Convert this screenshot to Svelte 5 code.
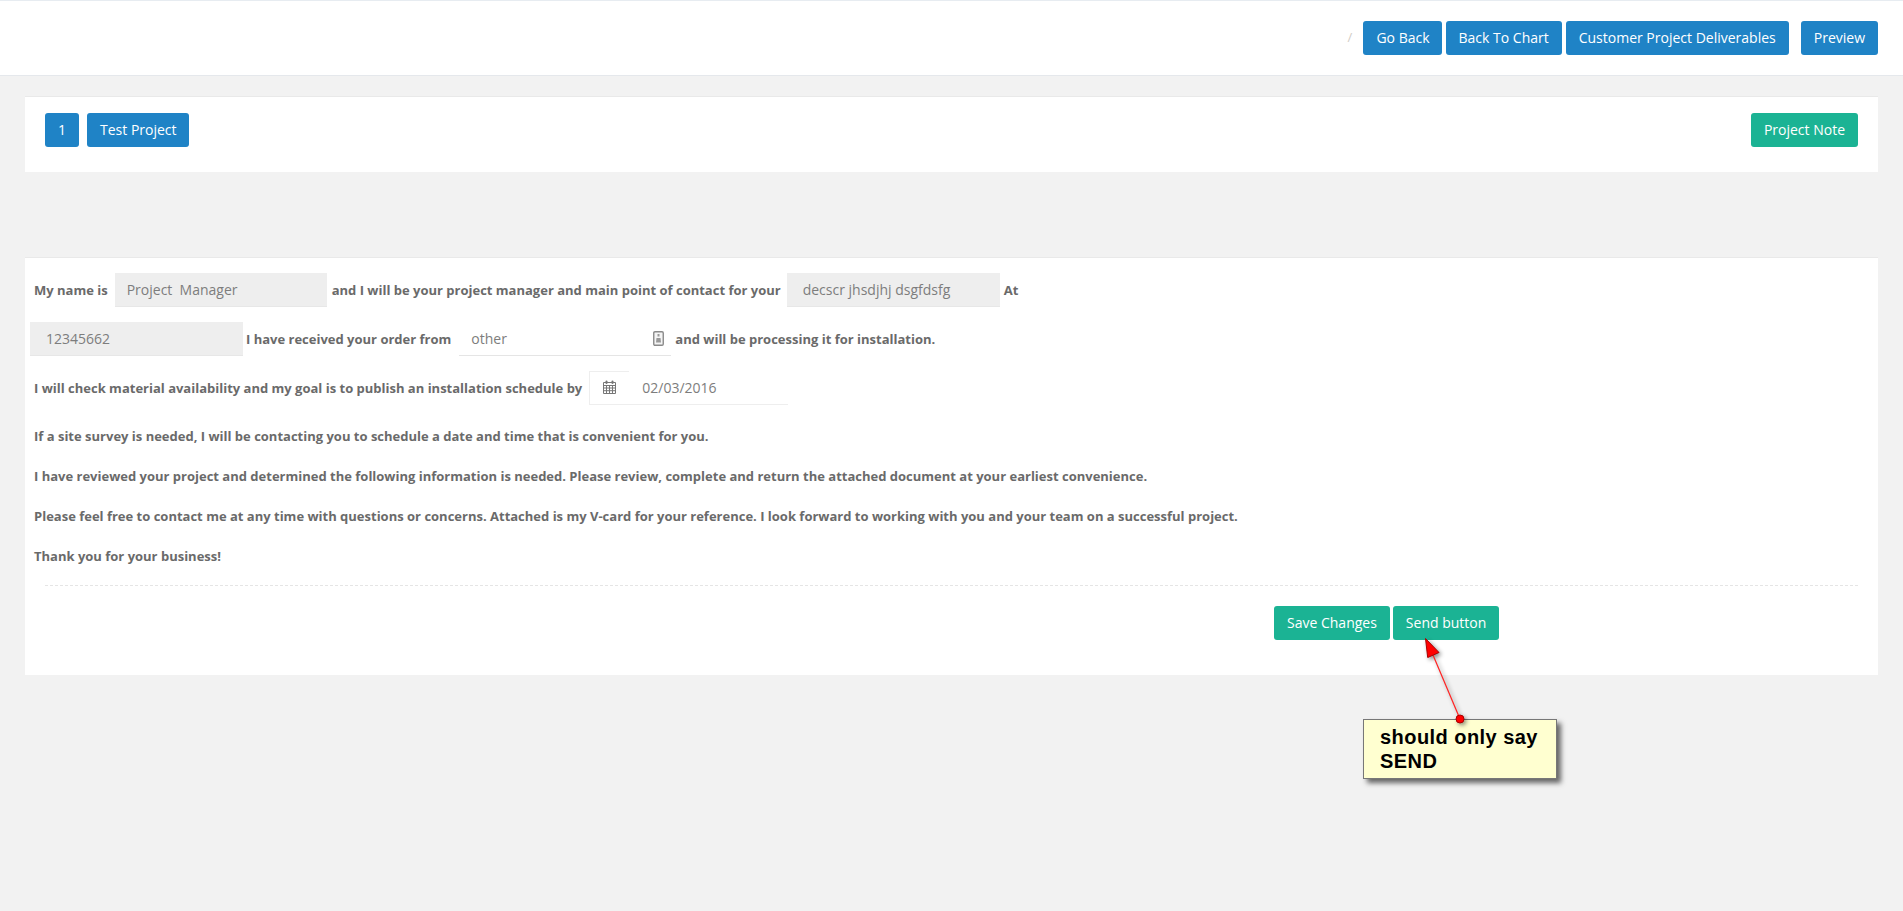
<script lang="ts">
  const topActions = [
    { label: "Go Back", cls: "tight" },
    { label: "Back To Chart", cls: "" },
    { label: "Customer Project Deliverables", cls: "" },
    { label: "Preview", cls: "push" },
  ];

  const paragraphs = [
    "If a site survey is needed, I will be contacting you to schedule a date and time that is convenient for you.",
    "I have reviewed your project and determined the following information is needed. Please review, complete and return the attached document at your earliest convenience.",
    "Please feel free to contact me at any time with questions or concerns. Attached is my V-card for your reference. I look forward to working with you and your team on a successful project.",
    "Thank you for your business!",
  ];
</script>

<div class="page">
  <header class="topbar">
    <span class="slash">/</span>
    {#each topActions as action}
      <button class="btn blue {action.cls}">{action.label}</button>
    {/each}
  </header>

  <section class="panel head">
    <button class="btn blue">1</button>
    <button class="btn blue tight">Test Project</button>
    <button class="btn green note">Project Note</button>
  </section>

  <section class="panel letter">
    <div class="row first">
      <b>My name is</b>
      <div class="field ro manager">Project&nbsp; Manager</div>
      <b>and I will be your project manager and main point of contact for your</b>
      <div class="field ro company">decscr jhsdjhj dsgfdsfg</div>
      <b>At</b>
    </div>
    <div class="row second">
      <div class="field ro num">12345662</div>
      <b>I have received your order from</b>
      <div class="field select">
        <span>other</span>
        <svg width="11" height="15" viewBox="0 0 11 15">
          <rect x="0.75" y="0.75" width="9.5" height="13.5" rx="1.2" fill="#f4f4f4" stroke="#8a8a8a" stroke-width="1.4" />
          <rect x="4.5" y="3" width="2" height="2.5" fill="#999" />
          <path d="M3 11.5 L8 11.5 L7.5 7 L3.5 7 Z" fill="#999" />
        </svg>
      </div>
      <b>and will be processing it for installation.</b>
    </div>
    <div class="row third">
      <b>I will check material availability and my goal is to publish an installation schedule by</b>
      <div class="date">
        <span class="addon">
          <svg width="13" height="14" viewBox="0 0 13 14">
            <path d="M0.5 2.5h12v11h-12z M0.5 5.5h12 M0.5 8h12 M0.5 10.7h12 M3.5 5.5v8 M6.5 5.5v8 M9.5 5.5v8" fill="none" stroke="#777" stroke-width="1" />
            <rect x="2.5" y="0.5" width="2" height="3.5" rx="1" fill="#777" />
            <rect x="8.5" y="0.5" width="2" height="3.5" rx="1" fill="#777" />
          </svg>
        </span>
        <span class="value">02/03/2016</span>
      </div>
    </div>
    {#each paragraphs as text}
      <p>{text}</p>
    {/each}
    <div class="actions">
      <button class="btn green">Save Changes</button>
      <button class="btn green">Send button</button>
    </div>
  </section>

  <!-- callout pasted on top of the screenshot -->
  <div class="callout">should only say SEND</div>
  <svg class="arrow" width="60" height="90" viewBox="0 0 60 90">
    <line x1="35" y1="81" x2="8" y2="17" stroke="#f22" stroke-width="1.2" />
    <path d="M0.5 0.5 L14 14.5 L2.7 19.5 Z" fill="#f00" stroke="#a00" stroke-width="1" />
    <circle cx="35" cy="81" r="4" fill="#f00" stroke="#a00" stroke-width="1" />
  </svg>
</div>

<style>
  :global(body) {
    background: #f2f2f2;
  }
  .page {
    position: relative;
    min-height: 911px;
    font-family: "Open Sans", sans-serif;
    font-size: 13px;
    color: #6a6a6a;
  }
  .topbar {
    height: 76px;
    box-sizing: border-box;
    background: #fff;
    border-top: 1px solid #e7ecf1;
    border-bottom: 1px solid #e5e8ec;
    padding: 20px 25px 0 0;
    display: flex;
    justify-content: flex-end;
    align-items: flex-start;
    gap: 4px;
  }
  .slash {
    color: #d2cdc6;
    line-height: 32px;
    margin-right: 7px;
  }
  .btn {
    height: 34px;
    box-sizing: border-box;
    padding: 6px 12px;
    border: 1px solid transparent;
    border-radius: 3px;
    font-family: "Open Sans", sans-serif;
    font-size: 14px;
    line-height: 20px;
    color: #fff;
    white-space: nowrap;
  }
  .tight {
    padding-right: 11px;
  }
  .blue {
    background: #1f83c6;
  }
  .green {
    background: #1bb394;
  }
  .push {
    margin-left: 8px;
  }
  .panel {
    background: #fff;
    margin: 0 25px;
    border-top: 1px solid #e9e9e9;
  }
  .head {
    margin-top: 20px;
    height: 76px;
    box-sizing: border-box;
    padding: 16px 20px;
    display: flex;
    gap: 8px;
  }
  .note {
    margin-left: auto;
  }
  .letter {
    margin-top: 85px;
    height: 418px;
    box-sizing: border-box;
    padding: 15px 5px 0;
  }
  .row {
    display: flex;
    align-items: center;
    height: 34px;
  }
  b {
    font-weight: 700;
    white-space: nowrap;
  }
  .first b:first-child,
  .third b {
    margin-left: 4px;
  }
  .second,
  .third {
    margin-top: 15px;
  }
  .field {
    box-sizing: border-box;
    height: 34px;
    width: 213px;
    padding: 0 16px;
    display: flex;
    align-items: center;
    font-size: 14px;
    color: #7d7d7d;
    flex: none;
  }
  .ro {
    background: #eee;
    border-bottom: 1px solid #e7e7e7;
    margin: 0 5px 0 6px;
  }
  .manager {
    width: 212px;
    margin-left: 7px;
    padding-left: 12px;
  }
  .company {
    margin-right: 4px;
  }
  .num {
    margin-left: 0;
    margin-right: 3px;
  }
  .select {
    width: 212px;
    margin: 0 4px 0 8px;
    padding: 0 7px 0 12px;
    justify-content: space-between;
    border-bottom: 1px solid #e5e5e5;
  }
  .date {
    display: flex;
    height: 34px;
    margin-left: 7px;
    font-size: 14px;
    color: #7d7d7d;
  }
  .addon {
    box-sizing: border-box;
    width: 40px;
    padding-bottom: 2px;
    border: 1px solid #eee;
    border-right: 0;
    display: flex;
    align-items: center;
    justify-content: center;
  }
  .value {
    box-sizing: border-box;
    width: 159px;
    padding-left: 13px;
    line-height: 34px;
    border-bottom: 1px solid #eee;
  }
  p {
    margin: 21px 0 0 4px;
    line-height: 20px;
    font-weight: 700;
    white-space: nowrap;
  }
  p + p {
    margin-top: 20px;
  }
  .actions {
    margin: 19px 15px 0;
    padding-top: 20px;
    padding-left: 1229px;
    border-top: 1px dashed #e5e5e5;
    display: flex;
    gap: 3px;
  }
  .callout {
    position: absolute;
    left: 1363px;
    top: 719px;
    width: 194px;
    height: 60px;
    box-sizing: border-box;
    padding: 5px 16px;
    background: #ffffd0;
    border: 1px solid #777;
    box-shadow: 4px 4px 5px #666;
    font-family: "Liberation Sans", sans-serif;
    font-size: 20px;
    font-weight: 700;
    letter-spacing: 0.45px;
    line-height: 24px;
    color: #000;
  }
  .arrow {
    position: absolute;
    left: 1425px;
    top: 638px;
    overflow: visible;
    filter: drop-shadow(2px 2px 2px rgba(0, 0, 0, 0.45));
  }
</style>
